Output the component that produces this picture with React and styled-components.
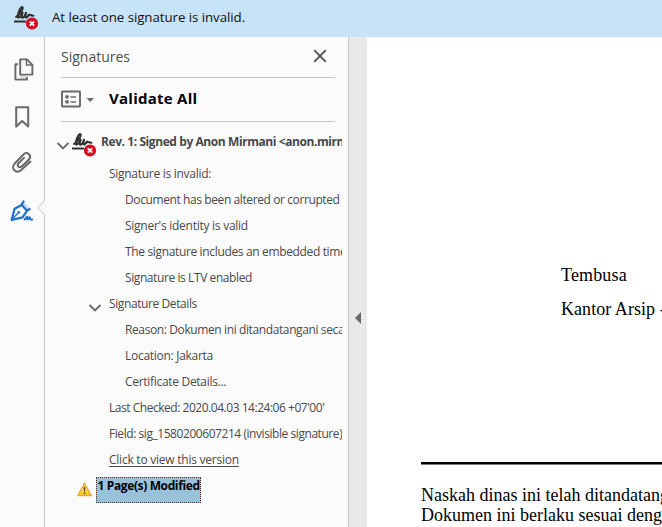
import React from "react";
import styled, { createGlobalStyle } from "styled-components";

const GlobalStyle = createGlobalStyle`
  * { box-sizing: border-box; }
  body { margin: 0; background: #fff; font-family: "Open Sans", "Noto Sans", sans-serif; }
  svg { display: block; flex: none; }
`;

const Window = styled.div`
  display: flex;
  flex-direction: column;
  width: 662px;
  height: 527px;
  overflow: hidden;
`;

const Banner = styled.header`
  display: flex;
  align-items: center;
  flex: none;
  height: 37px;
  padding-left: 14px;
  background: #c7e3f7;
`;

const BannerText = styled.span`
  margin: -3px 0 0 13px;
  font-size: 13.3px;
  letter-spacing: ${(p) => p.$ls || 0}px;
  color: #111;
  white-space: nowrap;
`;

const Body = styled.div`
  display: flex;
  flex: 1;
  min-height: 0;
`;

const Rail = styled.nav`
  display: flex;
  flex-direction: column;
  flex: none;
  width: 45px;
  padding-top: 21px;
  background: #fbfbfb;
  border-right: 1px solid #c6c6c6;
`;

const RailItem = styled.div`
  display: flex;
  flex: none;
  height: ${(p) => p.$h}px;
  padding-left: ${(p) => p.$x}px;
`;

const Notch = styled.svg`
  margin: 0 -1px 0 auto;
`;

const Panel = styled.section`
  display: flex;
  flex-direction: column;
  flex: none;
  width: 304px;
  background: #fbfbfb;
  border-right: 1px solid #c6c6c6;
`;

const PanelHead = styled.div`
  display: flex;
  align-items: center;
  justify-content: space-between;
  flex: none;
  height: 41px;
  margin: 0 13px 0 16px;
  padding: 0 8px 2px 0;
  border-bottom: 1px solid #c6c6c6;
`;

const PanelTitle = styled.h1`
  margin: 0;
  font-size: 14px;
  font-weight: 400;
  letter-spacing: ${(p) => p.$ls || 0}px;
  color: #505050;
`;

const Toolbar = styled.div`
  display: flex;
  align-items: center;
  flex: none;
  height: 44px;
  margin: 0 13px 0 16px;
  padding-bottom: 1px;
  border-bottom: 1px solid #c6c6c6;
`;

const ToolbarAction = styled.span`
  margin: -2px 0 0 15px;
  font-size: 15px;
  font-weight: 700;
  letter-spacing: ${(p) => p.$ls || 0}px;
  color: #000;
`;

const Tree = styled.div`
  display: flex;
  flex-direction: column;
  width: 297px;
  overflow: hidden;
`;

const Revision = styled.div`
  display: flex;
  flex: none;
  height: 40px;
  padding: 11px 0 0 11px;
`;

const RevisionLabel = styled.span`
  margin-left: 4px;
  font-size: 12px;
  line-height: 18px;
  font-weight: 700;
  letter-spacing: ${(p) => p.$ls || 0}px;
  color: #484848;
  white-space: nowrap;
`;

const Chevron = styled.svg`
  margin: ${(p) => p.$m};
`;

const Row = styled.div`
  display: flex;
  align-items: center;
  flex: none;
  height: 26px;
  padding-left: ${(p) => p.$indent}px;
  padding-bottom: 2px;
`;

const RowText = styled.span`
  font-size: 12px;
  line-height: 18px;
  letter-spacing: ${(p) => p.$ls || 0}px;
  color: #4a4a4a;
  white-space: nowrap;
  ${(p) => p.$link && "text-decoration: underline; text-underline-offset: 2px;"}
`;

const Modified = styled.div`
  display: flex;
  flex: none;
  height: 26px;
  margin-top: 3px;
  padding-left: 32px;
`;

const ModifiedLabel = styled.span`
  width: 105px;
  height: 26px;
  margin-left: 4px;
  padding-left: 0.5px;
  border: 1px dotted #5a3a20;
  background: #99c1da;
  font-size: 12px;
  line-height: 16px;
  font-weight: 700;
  letter-spacing: ${(p) => p.$ls || 0}px;
  color: #000;
  white-space: nowrap;
`;

const Splitter = styled.div`
  display: flex;
  flex: none;
  width: 18px;
  padding: 275px 0 0 6px;
  background: #e9e9e9;
`;

const Page = styled.main`
  flex: 1;
  min-width: 0;
  overflow: hidden;
  background: #fff;
  font-family: "Liberation Serif", serif;
  font-size: 18px;
  line-height: 20px;
  color: #000;
  white-space: nowrap;
`;

const CopyList = styled.div`
  display: flex;
  flex-direction: column;
  gap: 14px;
  padding: 228px 0 0 194px;
`;

const Footer = styled.div`
  margin: 143px 0 0 54px;
  padding-top: 21px;
  border-top: 2px solid #000;
  box-shadow: inset 0 1px #777;
`;

const Line = styled.div`
  letter-spacing: ${(p) => p.$ls || 0}px;
`;

const InvalidSignature = () => (
  <svg width="25" height="26" viewBox="0 0 25 26">
    <path
      d="M2.2 10.8C5.5 8.5 9.8 2.8 8.4 1.2C6.8 .2 3.2 8.2 4 11.2C4.6 12.8 7.4 9.6 8.6 6.6C7.6 9.6 7.2 11.8 8.6 11.8C10.2 11.6 11.4 8.4 12 6.8C11.4 9.2 11 11.6 12.4 11.6C14 11.2 14.2 8.6 15.2 8.6C15.8 10.2 17 8.4 18 9.4L19.4 9.8"
      fill="none" stroke="#303030" strokeWidth="2.1" strokeLinecap="round" strokeLinejoin="round"
    />
    <path d="M0 15.5H12" stroke="#303030" strokeWidth="2" />
    <circle cx="18" cy="17.5" r="6.1" fill="#d9091f" />
    <path d="M15.8 15.3L20.2 19.7M20.2 15.3L15.8 19.7" stroke="#fff" strokeWidth="1.8" />
  </svg>
);

const Pages = () => (
  <svg width="20" height="23" viewBox="0 0 20 23" fill="none" stroke="#696969" strokeWidth="1.9" strokeLinejoin="round">
    <path d="M6 17.5h7v4H6z" fill="#dedede" stroke="none" />
    <path d="M4 6.2H1.4V21.6H13V19" />
    <path d="M6.2 1.4H13L18.4 6.8V16.6H6.2Z" fill="#fbfbfb" />
    <path d="M12.5 1.8V7H18" strokeWidth="1.5" />
  </svg>
);

const Bookmark = () => (
  <svg width="15" height="22" viewBox="0 0 15 22" fill="none" stroke="#696969" strokeWidth="2" strokeLinejoin="round">
    <path d="M1.2 1.2H13.2V20.6L7.2 15L1.2 20.6Z" />
  </svg>
);

const Clip = () => (
  <svg width="20" height="22" viewBox="0 0 20 22" fill="none" stroke="#696969" strokeWidth="2" strokeLinecap="round">
    <path d="M18.4 10.2L9.3 18.6C3.8 23.1-1.5 16.8 2.5 12.4L11.2 3.3C15.7-.9 20.2 4.5 16.7 8.3L9.8 15C6.8 17.3 4.6 14.2 6.6 11.8L12 6.5" transform="translate(0 -.6)" />
  </svg>
);

const PenSign = () => (
  <svg width="24" height="22" viewBox="0 0 24 22" fill="none" stroke="#1f6fc9" strokeWidth="2.2" strokeLinecap="round" strokeLinejoin="round">
    <path d="M13.5 2L20 8L17 11L11 5Z" fill="#c9dcf0" stroke="none" />
    <path d="M11.2 5.2L4.6 8.8L1.6 20L12.5 17.4L16.6 11.4" />
    <path d="M13.5 1.5L11.5 4.8L16.8 10.6L19.6 9.2" />
    <path d="M2 19.3L8 13.2" strokeWidth="1.3" />
    <circle cx="8.8" cy="12.3" r="1.3" fill="#1f6fc9" stroke="none" />
    <path d="M14.5 19.6L17.3 16.4L17.2 19.6L19.8 17.2L20 19.5H22.2" strokeWidth="1.8" />
  </svg>
);

const Warning = () => (
  <svg width="15" height="15" viewBox="0 0 15 15">
    <defs>
      <linearGradient id="amber" x1="0" y1="0" x2="0" y2="1">
        <stop offset="0" stopColor="#fff3a8" />
        <stop offset="1" stopColor="#ffc414" />
      </linearGradient>
    </defs>
    <path d="M7.5 1L14.2 13.6H.8Z" fill="url(#amber)" stroke="#eba52c" strokeWidth="1.2" strokeLinejoin="round" />
    <path d="M6.6 4.8H8.4L8 9.7H7Z" fill="#5b481c" />
    <rect x="6.7" y="10.6" width="1.6" height="1.6" fill="#5b481c" />
  </svg>
);

const Expand = ({ m }) => (
  <Chevron $m={m} width="12" height="8" viewBox="0 0 12 8" fill="none" stroke="#696969" strokeWidth="1.8">
    <path d="M.6 1L6 6.4L11.4 1" />
  </Chevron>
);

const rows = [
  { text: "Signature is invalid:", indent: 64, ls: -0.28 },
  { text: "Document has been altered or corrupted", indent: 80, ls: -0.4 },
  { text: "Signer's identity is valid", indent: 80, ls: -0.26 },
  { text: "The signature includes an embedded timestamp", indent: 80, ls: -0.35 },
  { text: "Signature is LTV enabled", indent: 80, ls: -0.41 },
  { text: "Signature Details", indent: 44, open: true, ls: -0.4 },
  { text: "Reason: Dokumen ini ditandatangani secara", indent: 80, ls: -0.39 },
  { text: "Location: Jakarta", indent: 80, ls: -0.28 },
  { text: "Certificate Details...", indent: 80, ls: -0.3 },
  { text: "Last Checked: 2020.04.03 14:24:06 +07'00'", indent: 64, ls: -0.47 },
  { text: "Field: sig_1580200607214 (invisible signature)", indent: 64, ls: -0.44 },
  { text: "Click to view this version", indent: 64, link: true, ls: -0.24 },
];

export default function App() {
  return (
    <Window>
      <GlobalStyle />
      <Banner>
        <InvalidSignature />
        <BannerText $ls={-0.06}>At least one signature is invalid.</BannerText>
      </Banner>
      <Body>
        <Rail>
          <RailItem $h={48} $x={14}><Pages /></RailItem>
          <RailItem $h={46} $x={15}><Bookmark /></RailItem>
          <RailItem $h={48} $x={12}><Clip /></RailItem>
          <RailItem $h={30} $x={10}>
            <PenSign />
            <Notch width="8" height="15" viewBox="0 0 8 15">
              <path d="M8 0L.5 7.5L8 15" fill="#fbfbfb" stroke="#c6c6c6" />
            </Notch>
          </RailItem>
        </Rail>
        <Panel>
          <PanelHead>
            <PanelTitle>Signatures</PanelTitle>
            <svg width="14" height="14" viewBox="0 0 14 14" stroke="#505050" strokeWidth="1.9">
              <path d="M1.2 1.2L12.8 12.8M12.8 1.2L1.2 12.8" />
            </svg>
          </PanelHead>
          <Toolbar>
            <svg width="33" height="18" viewBox="0 0 33 18" fill="none" stroke="#696969">
              <rect x="1" y="1.5" width="18" height="15" strokeWidth="1.9" rx=".5" />
              <circle cx="6" cy="6.8" r="1.9" fill="#696969" stroke="none" />
              <circle cx="6" cy="11.8" r="1.9" fill="#696969" stroke="none" />
              <path d="M9.5 7H15M9.5 12H15" strokeWidth="1.6" />
              <path d="M25.5 8H33L29.2 12Z" fill="#696969" stroke="none" />
            </svg>
            <ToolbarAction $ls={0.25}>Validate All</ToolbarAction>
          </Toolbar>
          <Tree>
            <Revision>
              <Expand m="9px 3px 0 1px" />
              <InvalidSignature />
              <RevisionLabel $ls={-0.42}>Rev. 1: Signed by Anon Mirmani &lt;anon.mirmani</RevisionLabel>
            </Revision>
            {rows.map((r) => (
              <Row key={r.text} $indent={r.indent}>
                {r.open && <Expand m="7px 8px 0 0" />}
                <RowText $ls={r.ls} $link={r.link}>{r.text}</RowText>
              </Row>
            ))}
            <Modified>
              <Chevron as="div" $m="5px 0 0"><Warning /></Chevron>
              <ModifiedLabel $ls={-0.37}>1 Page(s) Modified</ModifiedLabel>
            </Modified>
          </Tree>
        </Panel>
        <Splitter>
          <svg width="6" height="12" viewBox="0 0 6 12"><path d="M6 0V12L0 6Z" fill="#696969" /></svg>
        </Splitter>
        <Page>
          <CopyList>
            <Line $ls={0.15}>Tembusa</Line>
            <Line $ls={0.05}>Kantor Arsip - Jakarta</Line>
          </CopyList>
          <Footer>
            <Line>Naskah dinas ini telah ditandatangani</Line>
            <Line>Dokumen ini berlaku sesuai dengan</Line>
          </Footer>
        </Page>
      </Body>
    </Window>
  );
}
